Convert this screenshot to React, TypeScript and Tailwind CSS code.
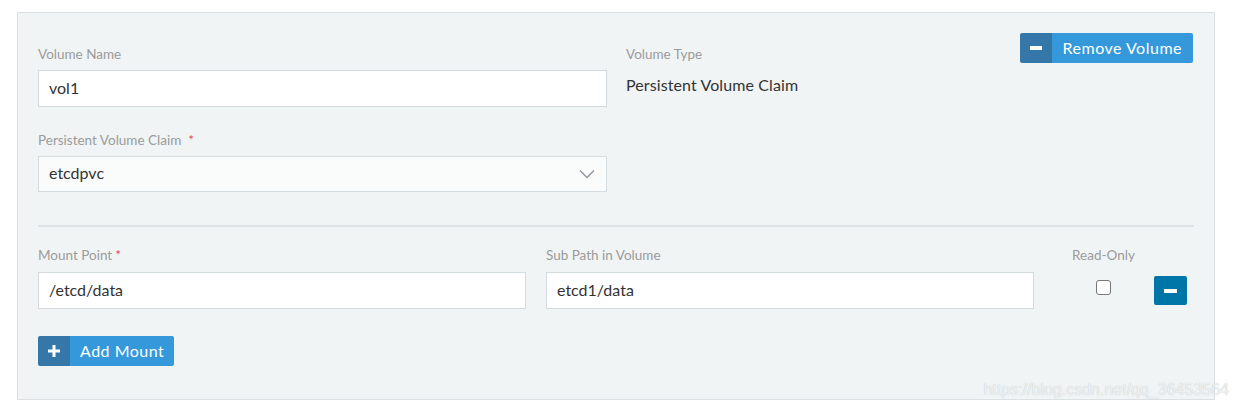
import React from "react";

const font = { fontFamily: "Lato, 'Open Sans', sans-serif" };

function Label({ children, req, gap }: { children: React.ReactNode; req?: boolean; gap?: boolean }) {
  return (
    <div className="h-[20px] leading-[20px] text-[13.5px] text-[#9b9b9b] whitespace-nowrap">
      {children}
      {req && <span className={`text-[#e5484d] ${gap ? "ml-[7px]" : "ml-[3px]"}`}>*</span>}
    </div>
  );
}

function Input({ value }: { value: string }) {
  return (
    <div className="h-[37px] border border-[#d3dadd] bg-white px-[10px] pb-[2px] flex items-center text-[16px] text-[#333]">
      {value}
    </div>
  );
}

export default function App() {
  return (
    <div className="w-[1235px] h-[409px] bg-white relative" style={font}>
      <div className="absolute left-[17px] top-[12px] w-[1198px] h-[388px] border border-[#dbe1e3] bg-[#f0f4f5] px-[20px] pt-[20px]">
        {/* top row */}
        <div className="flex items-start">
          <div className="w-[569px] pt-[11px]">
            <Label>Volume Name</Label>
            <div className="mt-[6px]">
              <Input value="vol1" />
            </div>
            <div className="mt-[23px]">
              <Label req gap>Persistent Volume Claim</Label>
            </div>
            <div className="mt-[6px] h-[36px] border border-[#d6dde0] bg-[#fafbfb] px-[10px] pb-[2px] flex items-center justify-between text-[16px] text-[#333]">
              <span>etcdpvc</span>
              <svg width="16" height="10" viewBox="0 0 16 10" className="mr-[1px] mt-[2px]">
                <path d="M1 1.5 L8 8.5 L15 1.5" fill="none" stroke="#8d939b" strokeWidth="1.3" />
              </svg>
            </div>
          </div>
          <div className="ml-[19px] flex-1 pt-[11px]">
            <Label>Volume Type</Label>
            <div className="mt-[11px] text-[16px] tracking-[0.1px] text-[#333] leading-[20px]">Persistent Volume Claim</div>
          </div>
          <button className="flex h-[30px] items-stretch rounded-[2px] overflow-hidden text-white text-[16px] tracking-[0.5px] mr-[1px]">
            <span className="w-[32px] bg-[#3577a8] flex items-center justify-center">
              <span className="block w-[12px] h-[4px] bg-white" />
            </span>
            <span className="bg-[#3498db] flex items-center pl-[11px] pr-[11px] pb-[1px]">Remove Volume</span>
          </button>
        </div>

        <div className="mt-[33px] h-[2px] bg-[#dde3e5]" />

        {/* mount row */}
        <div className="mt-[18px] flex items-start">
          <div className="w-[488px]">
            <Label req>Mount Point</Label>
            <div className="mt-[7px]">
              <Input value="/etcd/data" />
            </div>
          </div>
          <div className="ml-[20px] w-[488px]">
            <Label>Sub Path in Volume</Label>
            <div className="mt-[7px]">
              <Input value="etcd1/data" />
            </div>
          </div>
          <div className="ml-[37px] w-[65px] flex flex-col items-center">
            <Label>Read-Only</Label>
            <div className="mt-[15px] w-[15px] h-[15px] rounded-[3px] border border-[#777] bg-white" />
          </div>
          <button className="ml-[18px] mt-[31px] w-[33px] h-[29px] rounded-[2px] bg-[#0075a8] flex items-center justify-center">
            <span className="block w-[13px] h-[4px] bg-white" />
          </button>
        </div>

        <button className="mt-[27px] flex h-[30px] items-stretch rounded-[2px] overflow-hidden text-white text-[16px] tracking-[0.5px]">
          <span className="w-[32px] bg-[#3577a8] flex items-center justify-center">
            <svg width="12" height="12" viewBox="0 0 12 12">
              <rect x="4.5" y="0" width="3" height="12" fill="white" />
              <rect x="0" y="4.5" width="12" height="3" fill="white" />
            </svg>
          </span>
          <span className="bg-[#3498db] flex items-center pl-[10px] pr-[10px] pb-[1px]">Add Mount</span>
        </button>
      </div>
      <div
        className="absolute right-[6px] top-[380px] text-[16px] text-[#eef1f2] leading-[20px]"
        style={{ fontFamily: "'Liberation Sans', Arial, sans-serif", textShadow: "0 0 1px #b9bfc2" }}
      >
        https://blog.csdn.net/qq_36453564
      </div>
    </div>
  );
}
